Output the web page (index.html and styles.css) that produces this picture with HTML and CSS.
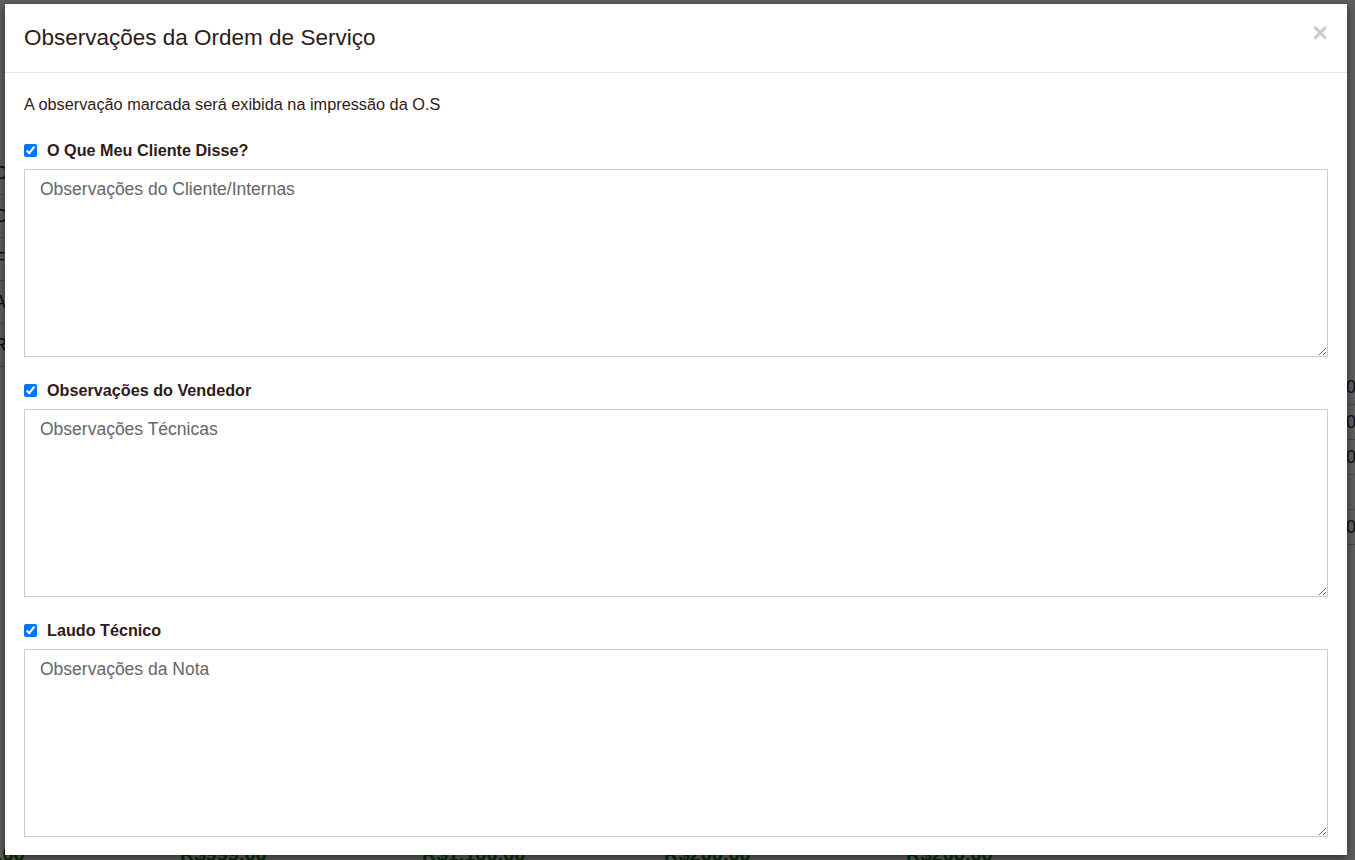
FILE: index.html
```html
<!DOCTYPE html>
<html lang="pt-BR">
<head>
<meta charset="utf-8">
<title>Observações da Ordem de Serviço</title>
<link rel="stylesheet" href="styles.css">
</head>
<body>
<div class="page">
  <div class="page-rows left-rows">
    <div class="row">O</div>
    <div class="row">O</div>
    <div class="row">F</div>
    <div class="row">A</div>
    <div class="row">R</div>
  </div>
  <div class="page-rows right-rows">
    <div class="row">0</div>
    <div class="row">0</div>
    <div class="row">0</div>
    <div class="row blank"></div>
    <div class="row">0</div>
  </div>
  <div class="totals">
    <span>R$999,00</span>
    <span>R$999,00</span>
    <span>R$1.100,00</span>
    <span>R$200,00</span>
    <span>R$200,00</span>
  </div>
</div>
<div class="overlay"></div>
<div class="modal">
  <div class="modal-header">
    <h4 class="modal-title">Observações da Ordem de Serviço</h4>
    <button class="close" type="button">×</button>
  </div>
  <div class="modal-body">
    <p class="hint">A observação marcada será exibida na impressão da O.S</p>
    <label class="check"><input type="checkbox" checked> O Que Meu Cliente Disse?</label>
    <textarea class="field" placeholder="Observações do Cliente/Internas"></textarea>
    <label class="check"><input type="checkbox" checked> Observações do Vendedor</label>
    <textarea class="field" placeholder="Observações Técnicas"></textarea>
    <label class="check"><input type="checkbox" checked> Laudo Técnico</label>
    <textarea class="field last" placeholder="Observações da Nota"></textarea>
  </div>
</div>
</body>
</html>
```
FILE: styles.css
```css
html, body {
  margin: 0;
  padding: 0;
  height: 100%;
}
body {
  background: #fff;
  font-family: "Liberation Sans", Arial, sans-serif;
  color: #2e1a1a;
  overflow: hidden;
  position: relative;
}
.page {
  height: 860px;
  position: relative;
  font-size: 18px;
  color: #222;
}
.page-rows {
  position: absolute;
  display: flex;
  flex-direction: column;
}
.left-rows {
  left: -6px;
  top: 152px;
  width: 30px;
}
.right-rows {
  left: 1346px;
  top: 370px;
  width: 40px;
}
.row {
  height: 43px;
  line-height: 43px;
  border-bottom: 1px solid #ccc;
  box-sizing: border-box;
}
.right-rows .row {
  height: 35px;
  line-height: 35px;
}
.totals {
  position: absolute;
  left: -62px;
  right: 0;
  top: 842px;
  display: flex;
  gap: 152px;
  font-size: 20px;
  font-weight: bold;
  color: #0a7a0a;
  line-height: 24px;
}
.totals span {
  width: 90px;
  white-space: nowrap;
}
.overlay {
  position: absolute;
  inset: 0;
  background: rgba(0, 0, 0, 0.63);
}
.modal {
  position: absolute;
  left: 5px;
  top: 4px;
  background: #fff;
  width: 1342px;
  height: 851px;
  box-sizing: border-box;
  box-shadow: 0 3px 9px rgba(0,0,0,0.5);
  display: flex;
  flex-direction: column;
}
.modal-header {
  display: flex;
  align-items: center;
  justify-content: space-between;
  padding: 17px 19px 19px;
  height: 69px;
  box-sizing: border-box;
  border-bottom: 1px solid #e5e5e5;
}
.modal-title {
  margin: 0;
  font-size: 22.5px;
  font-weight: normal;
  line-height: 33px;
  color: #2e1a1a;
}
.close {
  border: 0;
  background: transparent;
  padding: 0;
  margin: -8px 0 0 0;
  font-family: "Liberation Sans", Arial, sans-serif;
  font-size: 27px;
  font-weight: bold;
  line-height: 1;
  color: #000;
  opacity: 0.2;
  cursor: pointer;
}
.modal-body {
  padding: 21px 19px 17px 19px;
  display: flex;
  flex-direction: column;
}
.hint {
  margin: 0 0 26px;
  font-size: 16.3px;
  line-height: 20px;
}
.check {
  display: flex;
  align-items: center;
  height: 20px;
  font-size: 16.2px;
  font-weight: bold;
  margin-bottom: 9px;
}
.check input {
  width: 13px;
  height: 13px;
  margin: 0 10px 0 0;
  accent-color: #0075ff;
}
.field {
  display: block;
  width: 100%;
  height: 188px;
  box-sizing: border-box;
  border: 1px solid #cccccc;
  border-radius: 0;
  padding: 9px 15px;
  margin: 0 0 23px;
  font-family: "Liberation Sans", Arial, sans-serif;
  font-size: 17.5px;
  line-height: 20px;
  color: #333;
  resize: vertical;
}
.field.last {
  margin-bottom: 0;
}
.field::placeholder {
  color: #666;
  opacity: 1;
}
```
